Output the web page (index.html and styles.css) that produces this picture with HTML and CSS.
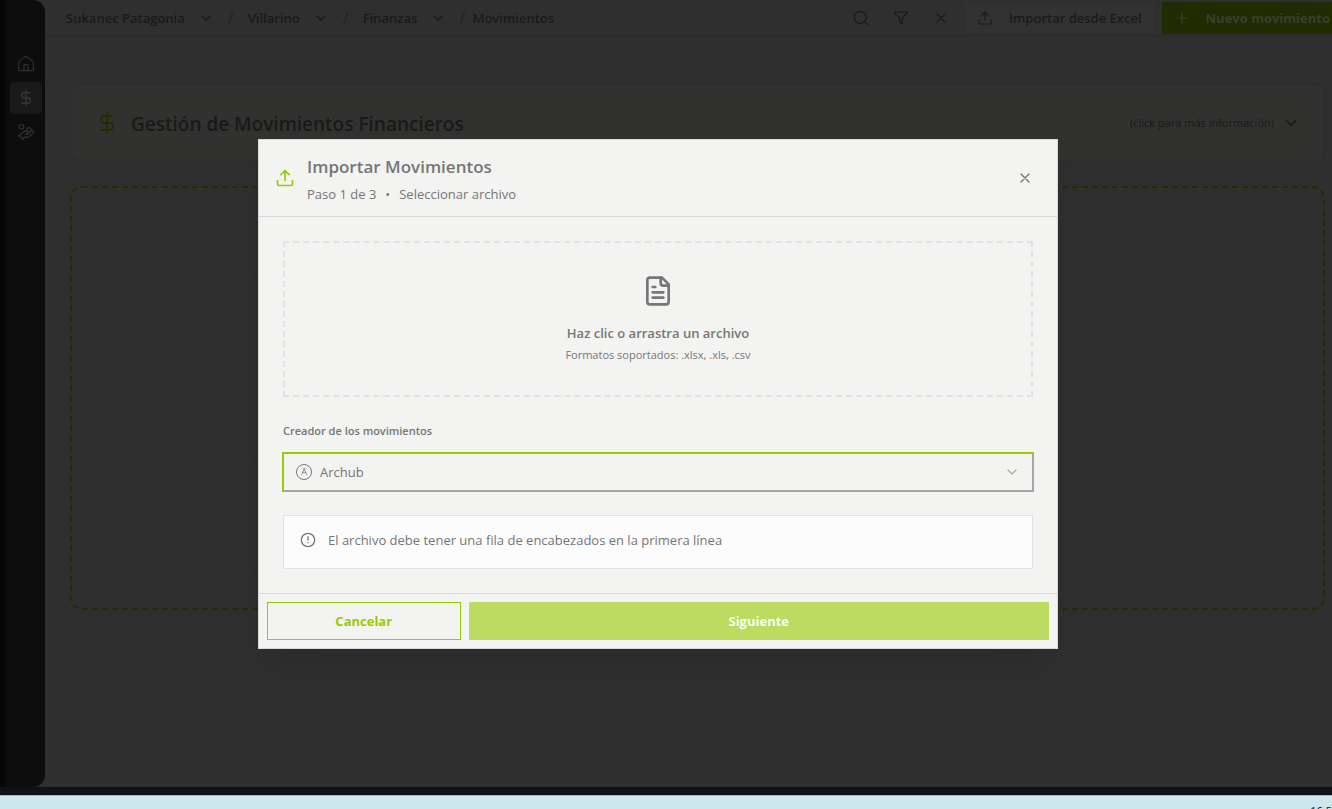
FILE: index.html
```html
<!DOCTYPE html>
<html lang="es">
<head>
<meta charset="utf-8">
<title>Movimientos</title>
<meta name="viewport" content="width=device-width, initial-scale=1">
<link rel="stylesheet" href="styles.css">
</head>
<body>
<svg class="sprite" aria-hidden="true">
  <symbol id="chevron" viewBox="0 0 24 24"><path d="m6 9 6 6 6-6"/></symbol>
  <symbol id="close" viewBox="0 0 24 24"><path d="M18 6 6 18M6 6l12 12"/></symbol>
  <symbol id="dollar" viewBox="0 0 24 24"><path d="M12 2v20M17 5H9.500a3.500 3.500 0 0 0 0 7h5a3.500 3.500 0 0 1 0 7H6"/></symbol>
  <symbol id="upload" viewBox="0 0 24 24"><path d="M21 15v4a2 2 0 0 1-2 2H5a2 2 0 0 1-2-2v-4M17 8l-5-5-5 5M12 3v12"/></symbol>
</svg>
<div class="app">
  <nav class="sidebar" aria-label="Principal">
    <button class="nav-item" aria-label="Inicio"><svg class="icon-16" viewBox="0 0 24 24"><path d="M15 22v-8a1 1 0 0 0-1-1h-4a1 1 0 0 0-1 1v8"/><path d="M1 10a2 2 0 0 1 .7-1.500l9-7.700a2 2 0 0 1 2.600 0l9 7.700A2 2 0 0 1 23 10v10a2 2 0 0 1-2 2H3a2 2 0 0 1-2-2z"/></svg></button>
    <button class="nav-item nav-item-active" aria-label="Finanzas"><svg class="icon-18"><use href="#dollar"/></svg></button>
    <button class="nav-item" aria-label="Aportes"><svg class="icon-18" viewBox="0 0 24 24"><path d="M11 15h2a2 2 0 1 0 0-4h-3c-.6 0-1.100.2-1.400.6L3 17"/><path d="m7 21 1.600-1.400c.3-.4.8-.6 1.400-.6h4c1.100 0 2.100-.4 2.800-1.200l4.600-4.400a2 2 0 0 0-2.750-2.910l-4.200 3.900"/><path d="m2 16 6 6"/><circle cx="16" cy="9" r="2.900"/><circle cx="6" cy="5" r="3"/></svg></button>
  </nav>
  <div class="page">
    <header class="topbar">
      <nav class="crumbs" aria-label="Ruta">
        <button class="crumb">Sukanec Patagonia<svg class="icon-16"><use href="#chevron"/></svg></button>
        <span class="slash">/</span>
        <button class="crumb">Villarino<svg class="icon-16"><use href="#chevron"/></svg></button>
        <span class="slash">/</span>
        <button class="crumb">Finanzas<svg class="icon-16"><use href="#chevron"/></svg></button>
        <span class="slash slash-last">/</span>
        <span class="crumb">Movimientos</span>
      </nav>
      <div class="tools">
        <button class="tool" aria-label="Buscar"><svg class="icon-16" viewBox="0 0 24 24"><circle cx="11" cy="11" r="9"/><path d="m22 22-4.600-4.600"/></svg></button>
        <button class="tool" aria-label="Filtrar"><svg class="icon-16" viewBox="0 0 24 24"><path d="M22 3H2l8 9.460V19l4 2v-8.540z"/></svg></button>
        <button class="tool" aria-label="Limpiar"><svg class="icon-16"><use href="#close"/></svg></button>
        <button class="action"><svg class="icon-16"><use href="#upload"/></svg>Importar desde Excel</button>
        <button class="action action-primary"><svg class="icon-16" viewBox="0 0 24 24"><path d="M4 12h16M12 4v16"/></svg>Nuevo movimiento</button>
      </div>
    </header>
    <main class="content">
      <section class="summary">
        <svg class="icon-24 summary-icon"><use href="#dollar"/></svg>
        <h1 class="summary-title">Gestión de Movimientos Financieros</h1>
        <button class="summary-more">(click para más información)<svg class="icon-18"><use href="#chevron"/></svg></button>
      </section>
      <section class="empty"></section>
    </main>
  </div>
  <div class="overlay">
    <div class="modal" role="dialog" aria-modal="true" aria-labelledby="modal-title">
      <header class="modal-header">
        <svg class="icon-20 modal-icon"><use href="#upload"/></svg>
        <div class="modal-heading">
          <h2 class="modal-title" id="modal-title">Importar Movimientos</h2>
          <p class="modal-step"><span>Paso 1 de 3</span><span>•</span><span>Seleccionar archivo</span></p>
        </div>
        <button class="modal-close" aria-label="Cerrar"><svg class="icon-16"><use href="#close"/></svg></button>
      </header>
      <div class="modal-body">
        <button class="dropzone">
          <svg class="icon-32" viewBox="0 0 24 24"><path d="M15 2H6a2 2 0 0 0-2 2v16a2 2 0 0 0 2 2h12a2 2 0 0 0 2-2V7Z"/><path d="M14 2v4a2 2 0 0 0 2 2h4M10 9H8M16 13H8M16 17H8"/></svg>
          <span class="dropzone-title">Haz clic o arrastra un archivo</span>
          <span class="dropzone-hint">Formatos soportados: .xlsx, .xls, .csv</span>
        </button>
        <label class="field-label" for="creator">Creador de los movimientos</label>
        <div class="field">
          <select class="select" id="creator"><option>Archub</option></select>
          <span class="avatar">A</span>
          <svg class="icon-16 field-chevron"><use href="#chevron"/></svg>
        </div>
        <div class="notice">
          <svg class="icon-16" viewBox="0 0 24 24"><circle cx="12" cy="12" r="10"/><path d="M12 7v5M12 16h.01"/></svg>
          <span>El archivo debe tener una fila de encabezados en la primera línea</span>
        </div>
      </div>
      <footer class="modal-footer">
        <button class="button button-outline">Cancelar</button>
        <button class="button button-solid">Siguiente</button>
      </footer>
    </div>
  </div>
</div>
<div class="window-edge"></div>
<div class="taskbar"><span>16:5</span></div>
</body>
</html>
```

FILE: styles.css
```css
* { box-sizing: border-box; }

body {
  margin: 0;
  height: 100vh;
  display: flex;
  flex-direction: column;
  overflow: hidden;
  background: #2f2f2f;
  color: #191919;
  font: 13px/20px "Open Sans", "Noto Sans", sans-serif;
}

button, select { font: inherit; color: inherit; }
button { border: 0; padding: 0; background: none; cursor: pointer; }
h1, h2, p { margin: 0; }

svg {
  flex: none;
  fill: none;
  stroke: currentColor;
  stroke-width: 2;
  stroke-linecap: round;
  stroke-linejoin: round;
}
.sprite { display: none; }
.icon-16 { width: 16px; height: 16px; }
.icon-18 { width: 18px; height: 18px; }
.icon-20 { width: 20px; height: 20px; }
.icon-24 { width: 24px; height: 24px; }
.icon-32 { width: 32px; height: 32px; }

.app { position: relative; flex: 1; min-height: 0; display: flex; }

.sidebar {
  width: 45px;
  flex: none;
  display: flex;
  flex-direction: column;
  gap: 2px;
  padding: 48px 3px 0 4px;
  border-left: 6px solid #070707;
  border-radius: 0 12px 12px 0;
  background: #0d0d0d;
  color: #2e2e2e;
}
.nav-item {
  width: 32px;
  height: 32px;
  display: grid;
  place-items: center;
  border-radius: 4px;
}
.nav-item svg { stroke-width: 1.8; }
.nav-item-active { background: #1a1a1a; color: #363636; }

.page { flex: 1; min-width: 0; display: flex; flex-direction: column; }

.topbar {
  height: 36px;
  flex: none;
  display: flex;
  align-items: center;
  justify-content: space-between;
  padding-left: 21px;
  border-bottom: 1px solid #2a2a2a;
  white-space: nowrap;
}
.crumbs { display: flex; align-items: center; font-weight: 600; }
.crumb { display: flex; align-items: center; gap: 13px; font-weight: 600; }
.slash { width: 34px; text-align: center; font-size: 16px; font-weight: 400; color: #222222; }
.slash-last { width: 20px; margin-left: 6px; }

.tools { display: flex; align-items: center; gap: 8px; }
.tool { width: 32px; height: 32px; display: grid; place-items: center; }
.tool svg, .action svg { stroke-width: 1.8; }
.action {
  height: 30px;
  display: flex;
  align-items: center;
  gap: 16px;
  padding: 0 12px;
  background: #323232;
  font-weight: 600;
}
.action-primary { height: 32px; padding-right: 2px; background: #1f2b00; color: #3a3f32; font-weight: 700; }

.content { flex: 1; display: flex; flex-direction: column; gap: 24px; padding: 48px 7px 0 25px; }
.summary {
  height: 78px;
  display: flex;
  align-items: center;
  gap: 12px;
  padding: 0 24px;
  border: 1px solid #2b2b2b;
  border-radius: 12px;
  background: #31312f;
}
.summary-icon { color: #222e00; }
.summary-title { flex: 1; padding-top: 2px; font-size: 19px; line-height: 28px; font-weight: 600; }
.summary-more { display: flex; align-items: center; gap: 8px; font-size: 11px; }
.empty {
  height: 424px;
  border: 2px dashed #222e00;
  border-radius: 12px;
  background: repeating-linear-gradient(45deg, #2f2f2f 0 9px, #30302d 9px 10px);
}

.overlay {
  position: absolute;
  inset: 0;
  display: grid;
  place-items: center;
  padding-right: 16px;
}
.modal {
  width: 100%;
  max-width: 800px;
  border: 1px solid #d8d8d6;
  background: #f3f3f1;
  color: #767676;
  box-shadow: 0 24px 40px -12px rgba(0, 0, 0, 0.12);
}
.modal-header {
  display: flex;
  align-items: center;
  gap: 12px;
  padding: 12px 16px;
  border-bottom: 1px solid #d8d8d8;
}
.modal-icon { color: #97cc05; }
.modal-heading { flex: 1; display: grid; gap: 4px; padding-top: 2px; }
.modal-title { font-size: 17px; line-height: 26px; font-weight: 600; }
.modal-step { display: flex; gap: 9px; }
.modal-close { width: 32px; height: 32px; display: grid; place-items: center; }

.modal-body { display: flex; flex-direction: column; padding: 24px; }
.dropzone {
  display: flex;
  flex-direction: column;
  align-items: center;
  padding: 32px;
  border: 2px dashed #e1e2e4;
}
.dropzone-title { margin: 16px 0 4px; font-weight: 600; }
.dropzone-hint { font-size: 11px; line-height: 16px; }

.field-label { margin: 24px 0 12px; font-size: 11px; font-weight: 600; }
.field { position: relative; display: flex; }
.select {
  flex: 1;
  height: 38px;
  padding: 0 36px;
  appearance: none;
  border: 1px solid #a5a5a5;
  border-radius: 0;
  outline: 1px solid #97cc05;
  background: transparent;
}
.avatar, .field-chevron { position: absolute; top: 11px; pointer-events: none; }
.avatar {
  left: 13px;
  width: 16px;
  height: 16px;
  border: 1px solid #767676;
  border-radius: 50%;
  text-align: center;
  font-size: 9px;
  line-height: 14px;
}
.field-chevron { right: 13px; color: #adadad; }

.notice {
  display: flex;
  align-items: center;
  gap: 12px;
  margin-top: 24px;
  padding: 14px 16px 18px;
  border: 1px solid #e1e2e4;
  background: #fcfcfc;
}

.modal-footer {
  display: grid;
  grid-template-columns: 1fr 3fr;
  gap: 8px;
  padding: 8px;
  border-top: 1px solid #d8d8d8;
}
.button { height: 38px; font-weight: 700; }
.button-outline { border: 1px solid #97cc05; color: #97cc05; }
.button-solid { background: #bbdc60; color: #f8fbef; }

.window-edge { height: 8px; flex: none; background: #110f18; }
.taskbar {
  height: 14px;
  flex: none;
  display: flex;
  justify-content: flex-end;
  padding-top: 5px;
  border-top: 1px solid #a9b4ba;
  overflow: hidden;
  background: #cde8ed;
  color: #111111;
  font-size: 11px;
}
```
